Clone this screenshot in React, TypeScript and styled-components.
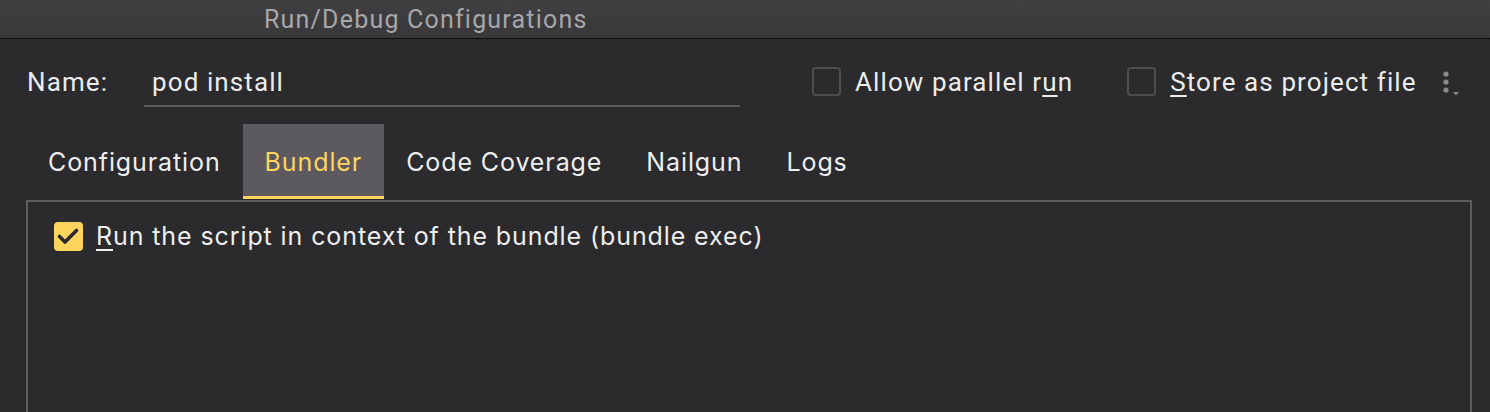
import React from "react";
import styled, { createGlobalStyle } from "styled-components";

const Global = createGlobalStyle`
  html, body {
    margin: 0;
    padding: 0;
    background: #2b2a2d;
    height: 412px;
    overflow: hidden;
  }
  #root { height: 412px; }
`;

const Window = styled.div`
  display: flex;
  flex-direction: column;
  height: 412px;
  background: #2b2a2d;
  font-family: Inter, "Noto Sans", sans-serif;
  color: #e6e6e6;
`;

const TitleBar = styled.div`
  height: 38px;
  flex: none;
  display: flex;
  align-items: center;
  padding-left: 264px;
  background: linear-gradient(#403f42, #38373a);
  border-bottom: 1px solid #0c0c0d;
`;

const TitleText = styled.span`
  font-family: Roboto, "Liberation Sans", sans-serif;
  font-size: 25px;
  color: #a7a6a9;
  letter-spacing: 1.2px;
`;

const NameRow = styled.div`
  height: 85px;
  flex: none;
  display: flex;
  align-items: center;
  padding: 0 20px 0 27px;
  font-family: Roboto, "Liberation Sans", sans-serif;
  font-size: 26px;
  letter-spacing: 1.1px;
  color: #ececec;
`;

const Label = styled.span`
  width: 117px;
  flex: none;
`;

const Field = styled.div`
  width: 596px;
  height: 46px;
  box-sizing: border-box;
  display: flex;
  align-items: center;
  padding: 0 0 2px 8px;
  border-bottom: 2px solid #5a595c;
  margin-top: 4px;
`;

const Options = styled.div`
  display: flex;
  align-items: center;
  margin-left: 72px;
`;

const Option = styled.label<{ $gap: number }>`
  display: flex;
  align-items: center;
  gap: 14px;
  margin-right: ${(p) => p.$gap}px;
`;

const Box = styled.span<{ $checked?: boolean }>`
  width: 29px;
  height: 29px;
  box-sizing: border-box;
  border-radius: 4px;
  flex: none;
  display: flex;
  align-items: center;
  justify-content: center;
  border: ${(p) => (p.$checked ? "none" : "2px solid #4e4d50")};
  background: ${(p) => (p.$checked ? "#ffd45d" : "transparent")};
`;

const Mnemonic = styled.span`
  text-decoration: underline;
  text-underline-offset: 4px;
  text-decoration-thickness: 2px;
`;

const Kebab = styled.div`
  display: flex;
  align-items: center;
  margin-left: 24px;
`;

const Tabs = styled.div`
  height: 75px;
  flex: none;
  display: flex;
  padding-left: 26px;
`;

const Tab = styled.div<{ $active?: boolean }>`
  display: flex;
  align-items: center;
  padding: 4px 22px 0;
  box-sizing: border-box;
  font-size: 25px;
  letter-spacing: 0.9px;
  color: ${(p) => (p.$active ? "#ffd45d" : "#eeeeee")};
  background: ${(p) => (p.$active ? "#5c5a5e" : "transparent")};
  border-bottom: 3px solid ${(p) => (p.$active ? "#ffd45d" : "transparent")};
`;

const Panel = styled.div`
  flex: 1;
  margin: 1px 18px 0 26px;
  border: 2px solid #5c5b5e;
  border-bottom: none;
  padding: 19px 26px;
`;

const CheckRow = styled.label`
  display: flex;
  align-items: center;
  gap: 13px;
  font-size: 25px;
  letter-spacing: 0.9px;
  color: #eeeeee;
`;

export default function App() {
  return (
    <>
      <Global />
      <Window>
        <TitleBar>
          <TitleText>Run/Debug Configurations</TitleText>
        </TitleBar>
        <NameRow>
          <Label>Name:</Label>
          <Field>pod install</Field>
          <Options>
            <Option $gap={54}>
              <Box />
              <span>
                Allow parallel r<Mnemonic>u</Mnemonic>n
              </span>
            </Option>
            <Option $gap={0}>
              <Box />
              <span>
                <Mnemonic>S</Mnemonic>tore as project file
              </span>
            </Option>
          </Options>
          <Kebab>
            <svg width="20" height="30" viewBox="0 0 20 30">
              <circle cx="5" cy="7" r="2.6" fill="#8a898c" />
              <circle cx="5" cy="15" r="2.6" fill="#8a898c" />
              <circle cx="5" cy="23" r="2.6" fill="#8a898c" />
              <path d="M12 25 L18 25 L15 28.5 Z" fill="#8a898c" />
            </svg>
          </Kebab>
        </NameRow>
        <Tabs>
          <Tab>Configuration</Tab>
          <Tab $active>Bundler</Tab>
          <Tab>Code Coverage</Tab>
          <Tab>Nailgun</Tab>
          <Tab>Logs</Tab>
        </Tabs>
        <Panel>
          <CheckRow>
            <Box $checked>
              <svg width="29" height="29" viewBox="0 0 29 29">
                <path
                  d="M5.5 14.5 L11 20 L22.5 8.5"
                  fill="none"
                  stroke="#29282b"
                  strokeWidth="3.6"
                  strokeLinecap="round"
                  strokeLinejoin="round"
                />
              </svg>
            </Box>
            <span>
              <Mnemonic>R</Mnemonic>un the script in context of the bundle (bundle exec)
            </span>
          </CheckRow>
        </Panel>
      </Window>
    </>
  );
}
